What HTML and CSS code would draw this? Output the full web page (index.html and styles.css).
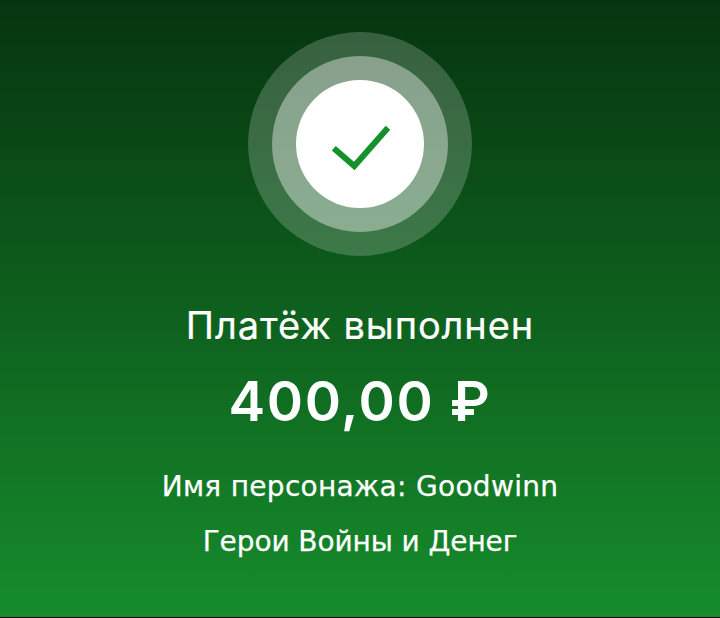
FILE: index.html
```html
<!DOCTYPE html>
<html lang="ru">
<head>
  <meta charset="UTF-8" />
  <meta name="viewport" content="width=device-width, initial-scale=1.0"/>
  <title>Платёж выполнен</title>
  <link rel="stylesheet" href="styles.css">
</head>
<body>
  <main class="screen">
    <div class="ring-outer">
      <div class="ring-middle">
        <div class="ring-inner">
          <svg class="check" width="64" height="64" viewBox="0 0 64 64" fill="none">
            <path d="M5.8 36.3 L26.3 54 L60 15.8" stroke="#14902c" stroke-width="6"/>
          </svg>
        </div>
      </div>
    </div>
    <h1 class="title">Платёж выполнен</h1>
    <div class="amount">400,00 ₽</div>
    <p class="detail detail-name">Имя персонажа: Goodwinn</p>
    <p class="detail">Герои Войны и Денег</p>
  </main>
</body>
</html>
```

FILE: styles.css
```css
html, body {
  margin: 0;
  height: 100%;
}
body {
  background: #000;
  font-family: "DejaVu Sans", sans-serif;
  color: #fff;
}
.screen {
  height: 617px;
  box-sizing: border-box;
  padding-top: 32px;
  background: linear-gradient(180deg, #06340f 0%, #168c2c 100%);
  display: flex;
  flex-direction: column;
  align-items: center;
  text-align: center;
}
.ring-outer, .ring-middle, .ring-inner {
  border-radius: 50%;
  display: flex;
  justify-content: center;
  align-items: center;
}
.ring-outer {
  width: 224px;
  height: 224px;
  background: rgba(255,255,255,0.2);
}
.ring-middle {
  width: 176px;
  height: 176px;
  background: rgba(255,255,255,0.4);
}
.ring-inner {
  width: 128px;
  height: 128px;
  background: #fff;
}
.title {
  margin: 45px 0 0;
  font-family: Inter, sans-serif;
  font-size: 38px;
  font-weight: 400;
  line-height: 48px;
  letter-spacing: 0.9px;
  -webkit-text-stroke: 0.2px #fff;
}
.amount {
  margin-top: 20px;
  font-family: Inter, sans-serif;
  font-size: 55px;
  font-weight: 600;
  line-height: 64px;
  letter-spacing: 1.6px;
}
.detail {
  margin: 0;
  font-size: 28px;
  line-height: 55px;
  letter-spacing: -0.1px;
  -webkit-text-stroke: 0.25px #fff;
}
.detail-name {
  letter-spacing: 0.3px;
}
.amount + .detail {
  margin-top: 26px;
}
```
